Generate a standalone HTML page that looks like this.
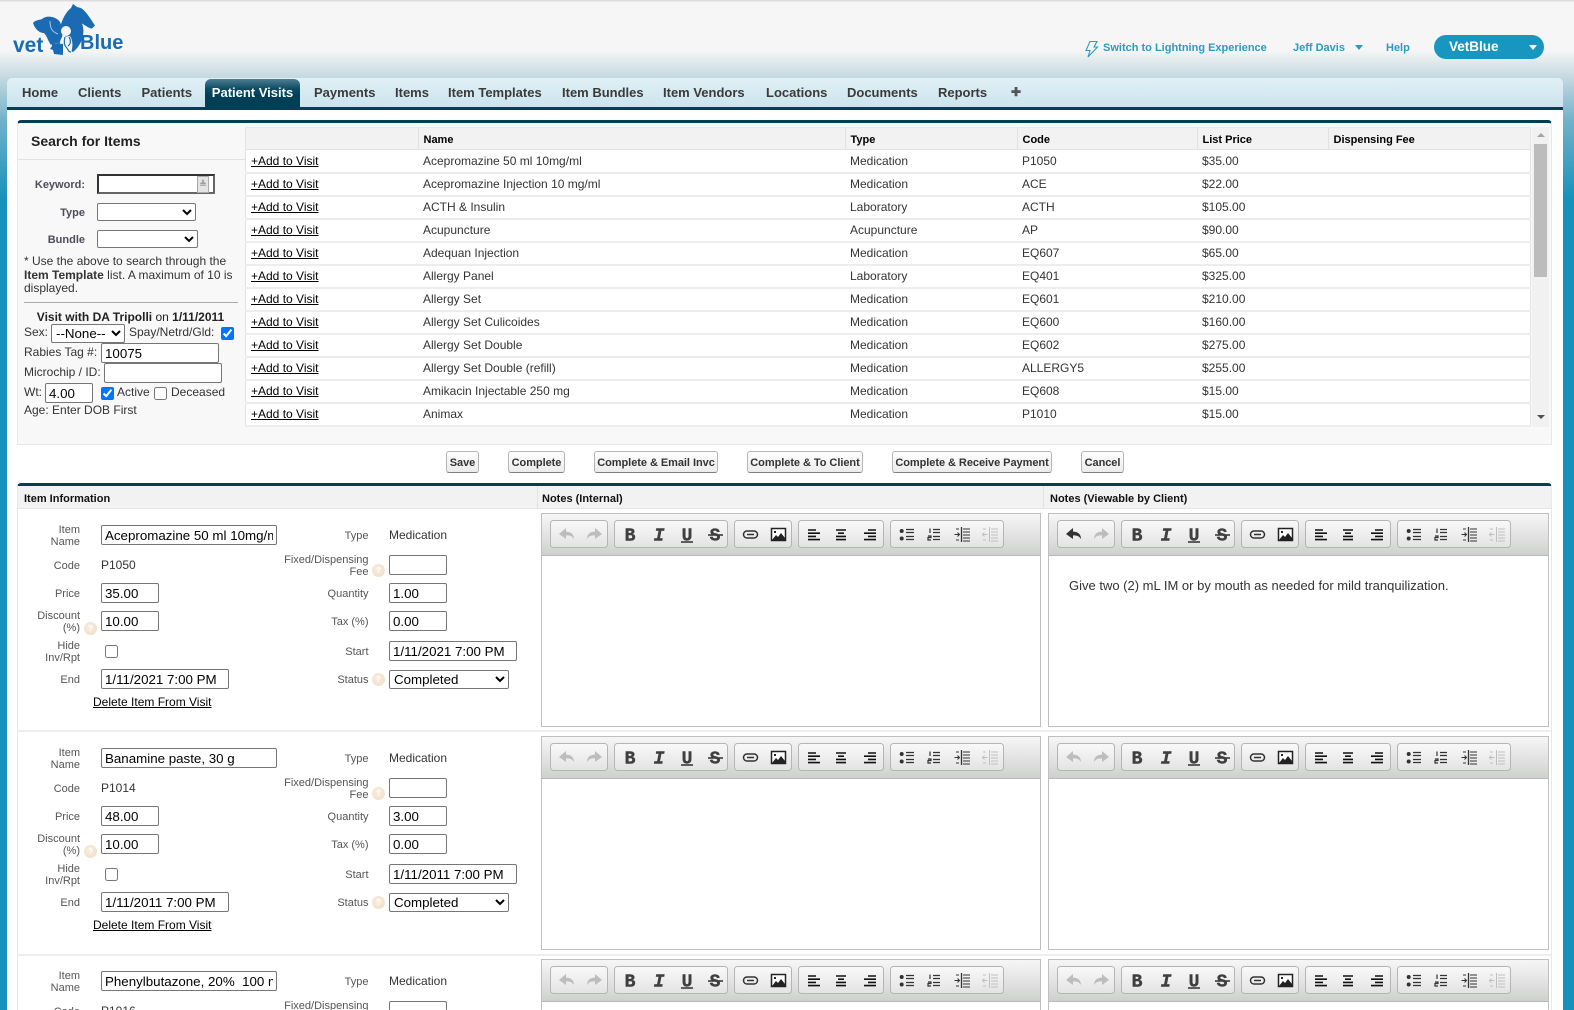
<!DOCTYPE html>
<html><head><meta charset="utf-8"><title>Patient Visit</title>
<style>
html,body{margin:0;padding:0;height:1010px;overflow:hidden}
body{width:1574px;position:relative;font-family:"Liberation Sans",Arial,sans-serif;font-size:12px;color:#333;background:linear-gradient(#f6f6f6 0,#f6f6f6 50px,#c3d8e0 78px,#72b2ca 120px,#1591bb 200px,#1591bb 100%)}
#top{left:0;top:0;width:1574px;height:1px;background:#ddd}
#top2{left:0;top:1px;width:1574px;height:1px;background:#e8e8e8}
#main{position:absolute;left:7px;top:110px;width:1556px;height:900px;background:#fff}
#bar{position:absolute;left:7px;top:78px;width:1556px;height:29px;background:linear-gradient(#e1f0f6,#cbe4ed);border-radius:5px 5px 0 0}
#barline{position:absolute;left:7px;top:107px;width:1556px;height:3px;background:#003f56}
.t{position:absolute;top:85px;font-size:13px;font-weight:bold;color:#3a3a3a;line-height:15px;white-space:nowrap}
#act{position:absolute;left:205px;top:79px;width:95px;height:28px;border-radius:6px 6px 0 0;background:linear-gradient(#4e7f92,#0b4c65 35%,#003f56 60%);color:#fff;font-size:13px;font-weight:bold;line-height:27px;text-align:center}
.h{position:absolute;font-size:11px;font-weight:bold;color:#2c9ac3;line-height:14px;white-space:nowrap}
#pill{position:absolute;left:1434px;top:35px;width:110px;height:24px;border-radius:12px;background:#1797c0;color:#fff;font-weight:bold;font-size:13.500px;line-height:23px;text-indent:15px}
#p1{position:absolute;left:17px;top:120px;width:1533px;height:321px;background:#f8f8f8;border:1px solid #e8e8e8;border-top:3px solid #003f56;border-radius:4px 4px 0 0}
#p2{position:absolute;left:17px;top:483px;width:1533px;height:524px;background:#fff;border:1px solid #e8e8e8;border-top:3px solid #003f56;border-bottom:0;border-radius:4px 4px 0 0}
table{position:absolute;left:245px;top:127px;width:1286px;border-collapse:collapse;table-layout:fixed;font-size:12px;background:#fff}
th{height:22px;background:#f2f2f2;font-size:11px;text-align:left;padding:2px 0 0 5px;color:#000;border:1px solid #e2e2e2;border-top:1px solid #e8e8e8;box-sizing:border-box}
td{height:23px;padding:0 0 0 5px;border-bottom:2px solid #ededed;box-sizing:border-box;color:#333;white-space:nowrap;line-height:20px}
td a{color:#000;text-decoration:underline}
td:first-child{border-left:1px solid #e2e2e2}
td:last-child{border-right:1px solid #e2e2e2}
#sb{position:absolute;left:1532px;top:127px;width:17px;height:300px;background:#f1f1f1}
#sb i{position:absolute;left:2px;top:17px;width:13px;height:133px;background:#bcbcbc}
.x{position:absolute;white-space:nowrap;line-height:14px}
.k{position:absolute;font-size:11px;font-weight:bold;color:#4d4d5c;text-align:right;line-height:14px}
input,select{position:absolute;box-sizing:border-box;margin:0;font-family:"Liberation Sans",Arial,sans-serif;font-size:13.333px;color:#000;background:#fff}
input[type=text]{border:1px solid #767676;border-radius:2px;padding:1px 3px;height:20px}
select{border:1px solid #767676;border-radius:2px;padding:0;height:19px}
input[type=checkbox]{width:13px;height:13px}
.btn{position:absolute;top:451px;height:22px;box-sizing:border-box;border:1px solid #b5b5b5;border-bottom-color:#7f7f7f;border-radius:3px;background:linear-gradient(#fdfdfd,#ececec);font-size:11px;font-weight:bold;color:#333;line-height:22px;text-align:center;white-space:nowrap;letter-spacing:-.05px}
.hd{position:absolute;top:492px;font-size:11px;font-weight:bold;color:#111;line-height:14px}
.sep{position:absolute;top:486px;width:1px;height:22px;background:#e2e2e2}
#hdbg{position:absolute;left:18px;top:486px;width:1533px;height:22px;background:#f2f2f2;border-bottom:1px solid #e6e6e6;box-sizing:content-box}
.r{position:absolute;left:0;width:1574px;height:223px}
.rl{position:absolute;left:18px;top:-1px;width:1533px;height:2px;background:#eee}
.l{position:absolute;font-size:11px;color:#555;line-height:12px;text-align:right;white-space:nowrap}
.v{position:absolute;font-size:12px;color:#333;line-height:14px;white-space:nowrap}
.q{position:absolute;width:13px;height:13px;border-radius:50%;background:radial-gradient(circle at 45% 40%,#f8eee0,#efdcc2);color:#fff;font-size:8px;font-weight:bold;line-height:13px;text-align:center}
.del{position:absolute;left:93px;top:187px;color:#000;text-decoration:underline;line-height:14px;white-space:nowrap}
.ed{position:absolute;top:5px;height:212px;border:1px solid #bfbfbf;background:#fff;box-sizing:content-box}
.tb{position:absolute;left:0;top:0;width:100%;height:41px;background:linear-gradient(#f6f6f6,#cfd1cf);border-bottom:1px solid #b8b8b8}
.tb svg{position:absolute;left:0;top:0}
.ed text{font-family:"Liberation Mono",monospace;font-weight:bold;font-size:18px;fill:#3f3f3f;stroke:#3f3f3f;stroke-width:.4;text-anchor:middle}
</style></head><body>
<svg width="0" height="0" style="position:absolute"><defs>
<linearGradient id="gg" x1="0" y1="0" x2="0" y2="1"><stop offset="0" stop-color="#f9f9f9"/><stop offset="1" stop-color="#e2e3e2"/></linearGradient>
<symbol id="tbs" viewBox="0 0 501 42" width="501" height="42">
<g fill="url(#gg)" stroke="#b4b6b4"><rect x="8.5" y="6.5" width="57" height="27" rx="3"/><rect x="72.5" y="6.5" width="113" height="27" rx="3"/><rect x="192.5" y="6.5" width="57" height="27" rx="3"/><rect x="256.5" y="6.5" width="85" height="27" rx="3"/><rect x="348.5" y="6.5" width="113" height="27" rx="3"/></g>
<path d="M17 20l7-6v3.600c5 0 8 2.600 8 7.400-2-3-4-3.600-8-3.600V25z" fill="#bdbdbd"/>
<path d="M60 20l-7-6v3.600c-5 0-8 2.600-8 7.400 2-3 4-3.600 8-3.600V25z" fill="#bdbdbd"/>
<path d="M139 28h12" stroke="#222" stroke-width="1.400"/>
<path d="M166 21h15" stroke="#222" stroke-width="1.400"/>
<g fill="none" stroke="#333" stroke-width="1.500"><rect x="201.500" y="17" width="14" height="7" rx="3.500"/><path d="M205 20.500h7"/></g>
<rect x="229.500" y="14.500" width="14" height="12" fill="#fff" stroke="#222" stroke-width="1.500"/><path d="M230 26l4-5 2 2 3-4 4 5v2h-13z" fill="#222"/><rect x="232" y="17" width="2" height="2" fill="#222"/>
<g stroke="#111" stroke-width="1.600" fill="none"><path d="M266 16h8M266 19.200h12M266 22.400h8M266 25.600h12M294 16h10M296 19.200h6M294 22.400h10M294 25.600h10M326 16h8M322 19.200h12M326 22.400h8M322 25.600h12"/></g>
<g fill="#333"><circle cx="359.700" cy="17" r="2"/><circle cx="359.700" cy="24.500" r="2"/></g>
<g stroke="#333" stroke-width="1.200" fill="none"><path d="M364 15.500h8M364 18.500h8M364 22.500h8M364 25.500h8M391 15.500h7M391 18.500h7M391 22.500h7M391 25.500h7M388 14.500v4.500M386 22h3v1.500h-3v2.500h3"/></g>
<g stroke="#333" stroke-width="1" fill="none"><path d="M419.500 13v15" stroke-width="1.300"/><path d="M421 15h7M421 18h7M421 21h7M421 24h7M421 27h7M412.500 20.500h5M415.500 18.500l2 2-2 2M414 15h3M414 26h3"/></g>
<g stroke="#c0c0c0" stroke-width="1" fill="none"><path d="M447.500 13v15M449 15h7M449 18h7M449 21h7M449 24h7M449 27h7M440.500 20.500h5M442.500 18.500l-2 2 2 2M441 15h3M441 26h3"/></g>
</symbol></defs></svg>

<div id="top" style="position:absolute"></div><div id="top2" style="position:absolute"></div>

<svg style="position:absolute;left:0;top:0" width="140" height="60" viewBox="0 0 140 60">
<path d="M60 28C62 19 66 12 71 8L73 4l4 3 4 1C87 12 91 20 95 25.500L92 28.500C88 28 85 25 82 23.500 83 27 84 30 83 35 82 42 78 48 73 52L68 50 64 30z" fill="#1a6bb3"/>
<path d="M33 23C35 20 40 20 42 19 46 15 56 16 60 22L63 30 61 45C57 42 53 43 51 45 48 41 47 36 44 33 39 33 35 29 33 23z" fill="#1a6bb3"/>
<path d="M50 21C50 28 52 32 58 34" fill="none" stroke="#a8c6e0" stroke-width="1"/>
<circle cx="66" cy="31" r="5" fill="#f6f6f6"/><path d="M62 37C59 42 59 47 61 53H71C73 47 73 40 70 36z" fill="#f6f6f6"/>
<path d="M65 37C64 41 64 45 66 47 69 50 68 52 71 52M69 37C71 40 71 44 68 46" fill="none" stroke="#1a6bb3" stroke-width="1.200"/>
<path d="M52 43l11 1v11l-9-1-1-4-3-1 2-3z" fill="#1a6bb3"/>
<text x="13" y="52" font-family="Liberation Sans" font-weight="bold" font-size="21" fill="#1a6bb3">vet</text>
<text x="80" y="49" font-family="Liberation Sans" font-weight="bold" font-size="20" fill="#1a6bb3">Blue</text>
</svg>

<svg style="position:absolute;left:1084px;top:40px" width="15" height="18" viewBox="0 0 15 18"><path d="M6 1.500h7L10 7h3.500L4 17l2-6.500H2z" fill="none" stroke="#2c9ac3" stroke-width="1.100"/></svg>
<div class="h" style="left:1103px;top:41px">Switch to Lightning Experience</div>
<div class="h" style="left:1293px;top:41px">Jeff Davis</div>
<div style="position:absolute;left:1355px;top:45px;width:0;height:0;border:4px solid transparent;border-top:5px solid #2c9ac3;border-bottom:0"></div>
<div class="h" style="left:1386px;top:41px">Help</div>
<div id="pill">VetBlue</div>
<div style="position:absolute;left:1529px;top:45px;width:0;height:0;border:4px solid transparent;border-top:5px solid #fff;border-bottom:0"></div>

<div id="main"></div>
<div id="bar"></div><div id="barline"></div>
<div class="t" style="left:22px">Home</div>
<div class="t" style="left:78px">Clients</div>
<div class="t" style="left:141.500px">Patients</div>
<div id="act">Patient Visits</div>
<div class="t" style="left:314px">Payments</div>
<div class="t" style="left:395px">Items</div>
<div class="t" style="left:448px">Item Templates</div>
<div class="t" style="left:562px">Item Bundles</div>
<div class="t" style="left:663px">Item Vendors</div>
<div class="t" style="left:766px">Locations</div>
<div class="t" style="left:847px">Documents</div>
<div class="t" style="left:938px">Reports</div>
<div class="t" style="left:1011px;font-size:12px;color:#555">✚</div>

<div id="p1"></div>
<div class="x" style="left:31px;top:134px;font-size:14px;font-weight:bold;color:#222">Search for Items</div>
<div style="position:absolute;left:18px;top:159px;width:227px;height:1px;background:#e2e2e2"></div>
<div class="k" style="left:20px;width:65px;top:178px">Keyword:</div>
<input type="text" style="left:97px;top:174px;width:118px;height:20px;border:2px solid #333;border-right-color:#666;border-bottom-color:#666;border-radius:0">
<div style="position:absolute;left:197px;top:176px;width:10px;height:15px;background:#e4e4e4;border:1px solid #aaa;box-sizing:content-box;font-size:9px;line-height:14px;text-align:center;color:#777">≜</div>
<div class="k" style="left:20px;width:65px;top:206px">Type</div>
<select style="left:97px;top:203px;width:99px;height:18px"><option></option></select>
<div class="k" style="left:20px;width:65px;top:233px">Bundle</div>
<select style="left:97px;top:230px;width:101px;height:18px"><option></option></select>
<div class="x" style="left:24px;top:254px;color:#333">* Use the above to search through the</div>
<div class="x" style="left:24px;top:268px;color:#333"><b>Item Template</b> list. A maximum of 10 is</div>
<div class="x" style="left:24px;top:281px;color:#333">displayed.</div>
<div style="position:absolute;left:24px;top:302px;width:214px;height:1px;background:#aaa"></div>
<div class="x" style="left:24px;width:213px;top:310px;text-align:center;color:#222"><b>Visit with DA Tripolli</b> on <b>1/11/2011</b></div>
<div class="x" style="left:24px;top:325px">Sex:</div>
<select style="left:51px;top:324px;width:74px;height:19px"><option>--None--</option></select>
<div class="x" style="left:129px;top:325px">Spay/Netrd/Gld:</div>
<input type="checkbox" checked style="left:221px;top:327px">
<div class="x" style="left:24px;top:345px">Rabies Tag #:</div>
<input type="text" value="10075" style="left:101px;top:343px;width:118px">
<div class="x" style="left:24px;top:365px">Microchip / ID:</div>
<input type="text" style="left:104px;top:363px;width:118px">
<div class="x" style="left:24px;top:385px">Wt:</div>
<input type="text" value="4.00" style="left:45px;top:383px;width:48px">
<input type="checkbox" checked style="left:101px;top:387px">
<div class="x" style="left:117px;top:385px">Active</div>
<input type="checkbox" style="left:154px;top:387px">
<div class="x" style="left:171px;top:385px">Deceased</div>
<div class="x" style="left:24px;top:403px">Age: Enter DOB First</div>

<table><colgroup><col style="width:172.500px"><col style="width:427px"><col style="width:172px"><col style="width:180px"><col style="width:131px"><col></colgroup>
<tr><th></th><th>Name</th><th>Type</th><th>Code</th><th>List Price</th><th>Dispensing Fee</th></tr>
<tr><td><a>+Add to Visit</a></td><td>Acepromazine 50 ml 10mg/ml</td><td>Medication</td><td>P1050</td><td>$35.00</td><td></td></tr>
<tr><td><a>+Add to Visit</a></td><td>Acepromazine Injection 10 mg/ml</td><td>Medication</td><td>ACE</td><td>$22.00</td><td></td></tr>
<tr><td><a>+Add to Visit</a></td><td>ACTH &amp; Insulin</td><td>Laboratory</td><td>ACTH</td><td>$105.00</td><td></td></tr>
<tr><td><a>+Add to Visit</a></td><td>Acupuncture</td><td>Acupuncture</td><td>AP</td><td>$90.00</td><td></td></tr>
<tr><td><a>+Add to Visit</a></td><td>Adequan Injection</td><td>Medication</td><td>EQ607</td><td>$65.00</td><td></td></tr>
<tr><td><a>+Add to Visit</a></td><td>Allergy Panel</td><td>Laboratory</td><td>EQ401</td><td>$325.00</td><td></td></tr>
<tr><td><a>+Add to Visit</a></td><td>Allergy Set</td><td>Medication</td><td>EQ601</td><td>$210.00</td><td></td></tr>
<tr><td><a>+Add to Visit</a></td><td>Allergy Set Culicoides</td><td>Medication</td><td>EQ600</td><td>$160.00</td><td></td></tr>
<tr><td><a>+Add to Visit</a></td><td>Allergy Set Double</td><td>Medication</td><td>EQ602</td><td>$275.00</td><td></td></tr>
<tr><td><a>+Add to Visit</a></td><td>Allergy Set Double (refill)</td><td>Medication</td><td>ALLERGY5</td><td>$255.00</td><td></td></tr>
<tr><td><a>+Add to Visit</a></td><td>Amikacin Injectable 250 mg</td><td>Medication</td><td>EQ608</td><td>$15.00</td><td></td></tr>
<tr><td><a>+Add to Visit</a></td><td>Animax</td><td>Medication</td><td>P1010</td><td>$15.00</td><td></td></tr>
</table>
<div id="sb"><i></i>
<div style="position:absolute;left:5px;top:6px;width:0;height:0;border:4px solid transparent;border-bottom:4px solid #a3a3a3;border-top:0"></div>
<div style="position:absolute;left:5px;top:288px;width:0;height:0;border:4px solid transparent;border-top:4px solid #505050;border-bottom:0"></div></div>

<div class="btn" style="left:446px;width:33px">Save</div>
<div class="btn" style="left:508px;width:57px">Complete</div>
<div class="btn" style="left:594px;width:124px">Complete &amp; Email Invc</div>
<div class="btn" style="left:747px;width:116px">Complete &amp; To Client</div>
<div class="btn" style="left:892px;width:160px">Complete &amp; Receive Payment</div>
<div class="btn" style="left:1081px;width:43px">Cancel</div>

<div id="p2"></div><div id="hdbg"></div>
<div class="sep" style="left:537px"></div><div class="sep" style="left:1043px"></div>
<div class="hd" style="left:24px">Item Information</div>
<div class="hd" style="left:542px">Notes (Internal)</div>
<div class="hd" style="left:1050px">Notes (Viewable by Client)</div>

<!-- ROW 1 -->
<div class="r" style="top:508px">
<div class="l" style="left:0;width:80px;top:16px">Item<br>Name</div>
<input type="text" value="Acepromazine 50 ml 10mg/ml" style="left:101px;top:17px;width:176px">
<div class="l" style="left:0;width:80px;top:52px">Code</div><div class="v" style="left:101px;top:50px">P1050</div>
<div class="l" style="left:0;width:80px;top:80px">Price</div><input type="text" value="35.00" style="left:101px;top:75px;width:58px">
<div class="l" style="left:0;width:80px;top:102px">Discount<br>(%)</div><div class="q" style="left:84px;top:114px">?</div><input type="text" value="10.00" style="left:101px;top:103px;width:58px">
<div class="l" style="left:0;width:80px;top:132px">Hide<br>Inv/Rpt</div><input type="checkbox" style="left:105px;top:137px">
<div class="l" style="left:0;width:80px;top:166px">End</div><input type="text" value="1/11/2021 7:00 PM" style="left:101px;top:161px;width:128px">
<a class="del">Delete Item From Visit</a>
<div class="l" style="left:200px;width:168.500px;top:22px">Type</div><div class="v" style="left:389px;top:20px">Medication</div>
<div class="l" style="left:200px;width:168.500px;top:46px">Fixed/Dispensing<br>Fee</div><div class="q" style="left:372px;top:56px">?</div><input type="text" style="left:389px;top:47px;width:58px">
<div class="l" style="left:200px;width:168.500px;top:80px">Quantity</div><input type="text" value="1.00" style="left:389px;top:75px;width:58px">
<div class="l" style="left:200px;width:168.500px;top:108px">Tax (%)</div><input type="text" value="0.00" style="left:389px;top:103px;width:58px">
<div class="l" style="left:200px;width:168.500px;top:138px">Start</div><input type="text" value="1/11/2021 7:00 PM" style="left:389px;top:133px;width:128px">
<div class="l" style="left:200px;width:168.500px;top:166px">Status</div><div class="q" style="left:372px;top:165px">?</div><select style="left:389px;top:162px;width:120px"><option>Completed</option></select>
<div class="ed" style="left:541px;width:498px"><div class="tb"><svg width="501" height="42"><use href="#tbs"/><text x="88" y="26.500">B</text><text x="117" y="26.500" font-style="italic">I</text><text x="145" y="26.500">U</text><text x="173" y="26.500">S</text></svg></div></div>
<div class="ed" style="left:1048px;width:499px"><div class="tb"><svg width="501" height="42"><use href="#tbs"/><path d="M17 20l7-6v3.600c5 0 8 2.600 8 7.400-2-3-4-3.600-8-3.600V25z" fill="#333"/><text x="88" y="26.500">B</text><text x="117" y="26.500" font-style="italic">I</text><text x="145" y="26.500">U</text><text x="173" y="26.500">S</text></svg></div>
<div class="x" style="left:20px;top:65px;color:#333;font-size:13px">Give two (2) mL IM or by mouth as needed for mild tranquilization.</div></div>
</div>

<!-- ROW 2 -->
<div class="r" style="top:731px"><div class="rl"></div>
<div class="l" style="left:0;width:80px;top:16px">Item<br>Name</div>
<input type="text" value="Banamine paste, 30 g" style="left:101px;top:17px;width:176px">
<div class="l" style="left:0;width:80px;top:52px">Code</div><div class="v" style="left:101px;top:50px">P1014</div>
<div class="l" style="left:0;width:80px;top:80px">Price</div><input type="text" value="48.00" style="left:101px;top:75px;width:58px">
<div class="l" style="left:0;width:80px;top:102px">Discount<br>(%)</div><div class="q" style="left:84px;top:114px">?</div><input type="text" value="10.00" style="left:101px;top:103px;width:58px">
<div class="l" style="left:0;width:80px;top:132px">Hide<br>Inv/Rpt</div><input type="checkbox" style="left:105px;top:137px">
<div class="l" style="left:0;width:80px;top:166px">End</div><input type="text" value="1/11/2011 7:00 PM" style="left:101px;top:161px;width:128px">
<a class="del">Delete Item From Visit</a>
<div class="l" style="left:200px;width:168.500px;top:22px">Type</div><div class="v" style="left:389px;top:20px">Medication</div>
<div class="l" style="left:200px;width:168.500px;top:46px">Fixed/Dispensing<br>Fee</div><div class="q" style="left:372px;top:56px">?</div><input type="text" style="left:389px;top:47px;width:58px">
<div class="l" style="left:200px;width:168.500px;top:80px">Quantity</div><input type="text" value="3.00" style="left:389px;top:75px;width:58px">
<div class="l" style="left:200px;width:168.500px;top:108px">Tax (%)</div><input type="text" value="0.00" style="left:389px;top:103px;width:58px">
<div class="l" style="left:200px;width:168.500px;top:138px">Start</div><input type="text" value="1/11/2011 7:00 PM" style="left:389px;top:133px;width:128px">
<div class="l" style="left:200px;width:168.500px;top:166px">Status</div><div class="q" style="left:372px;top:165px">?</div><select style="left:389px;top:162px;width:120px"><option>Completed</option></select>
<div class="ed" style="left:541px;width:498px"><div class="tb"><svg width="501" height="42"><use href="#tbs"/><text x="88" y="26.500">B</text><text x="117" y="26.500" font-style="italic">I</text><text x="145" y="26.500">U</text><text x="173" y="26.500">S</text></svg></div></div>
<div class="ed" style="left:1048px;width:499px"><div class="tb"><svg width="501" height="42"><use href="#tbs"/><text x="88" y="26.500">B</text><text x="117" y="26.500" font-style="italic">I</text><text x="145" y="26.500">U</text><text x="173" y="26.500">S</text></svg></div></div>
</div>

<!-- ROW 3 -->
<div class="r" style="top:954px;height:56px;overflow:hidden"><div class="rl" style="top:0"></div>
<div class="l" style="left:0;width:80px;top:16px">Item<br>Name</div>
<input type="text" value="Phenylbutazone, 20%  100 ml" style="left:101px;top:17px;width:176px">
<div class="l" style="left:0;width:80px;top:52px;height:4px;overflow:hidden">Code</div><div class="v" style="left:101px;top:50px;height:6px;overflow:hidden">P1016</div>
<div class="l" style="left:200px;width:168.500px;top:22px">Type</div><div class="v" style="left:389px;top:20px">Medication</div>
<div class="l" style="left:200px;width:168.500px;top:46px;height:10px;overflow:hidden">Fixed/Dispensing</div><input type="text" style="left:389px;top:47px;width:58px;height:9px;border-bottom:0;border-radius:2px 2px 0 0">
<div class="ed" style="left:541px;width:498px;height:50px;border-bottom:0;overflow:hidden"><div class="tb"><svg width="498" height="41"><use href="#tbs"/><text x="88" y="26.500">B</text><text x="117" y="26.500" font-style="italic">I</text><text x="145" y="26.500">U</text><text x="173" y="26.500">S</text></svg></div></div>
<div class="ed" style="left:1048px;width:499px;height:50px;border-bottom:0;overflow:hidden"><div class="tb"><svg width="499" height="41"><use href="#tbs"/><text x="88" y="26.500">B</text><text x="117" y="26.500" font-style="italic">I</text><text x="145" y="26.500">U</text><text x="173" y="26.500">S</text></svg></div></div>
</div>
</body></html>
